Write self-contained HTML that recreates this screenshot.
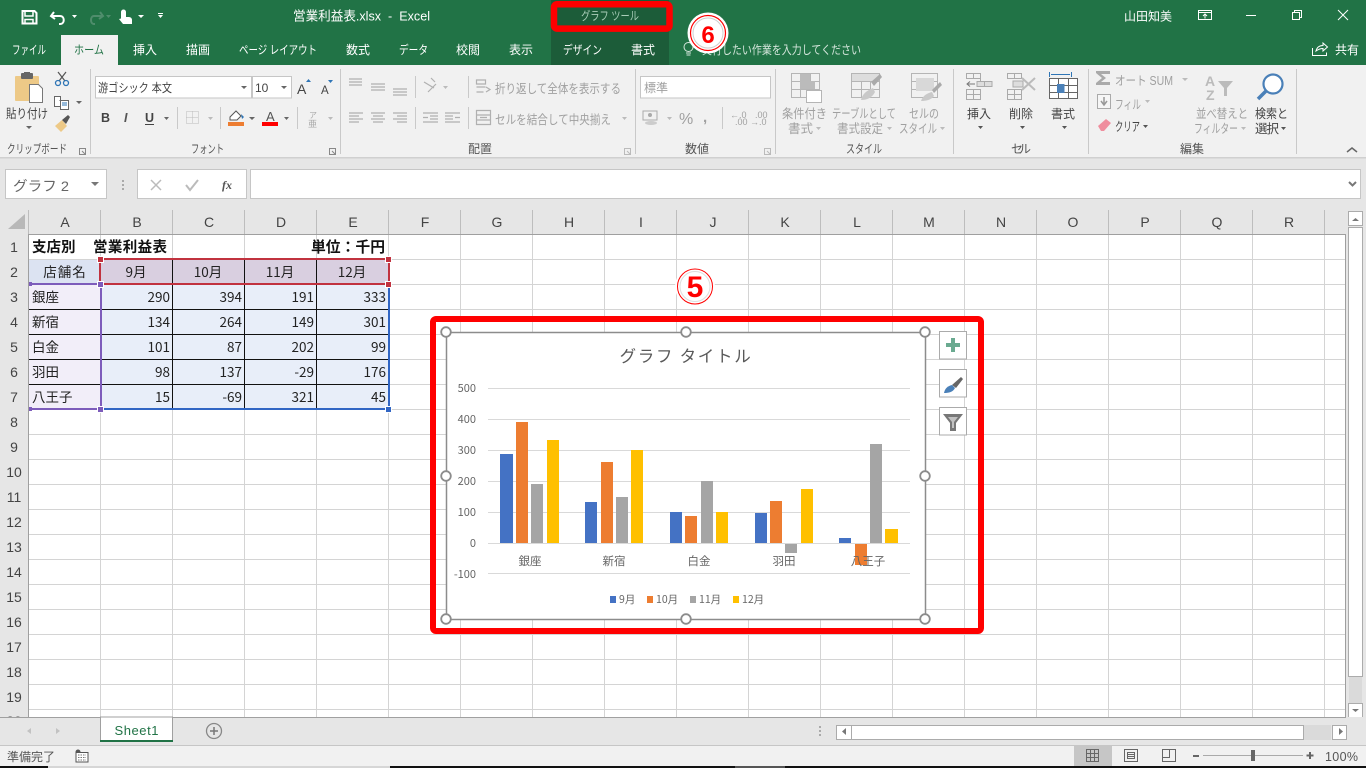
<!DOCTYPE html>
<html lang="ja"><head><meta charset="utf-8"><title>営業利益表.xlsx - Excel</title>
<style>
html,body{margin:0;padding:0;background:#e6e6e6;overflow:hidden}
svg{display:block;position:absolute;left:0;top:0}
text{font-family:"Liberation Sans","Noto Sans CJK JP",sans-serif}
.j{font-family:"Noto Sans CJK JP",sans-serif}
.w{fill:#fff;font-size:12px}
.d{fill:#a0a0a0;font-size:12.5px}
.e{fill:#444;font-size:12.5px}
.h{fill:#444;font-size:14px;text-anchor:middle}
.c{fill:#222;font-size:13.5px;font-family:"Noto Sans CJK JP",sans-serif}
.r{text-anchor:end}
.m{text-anchor:middle}
.a{fill:#666;font-size:11px;font-family:"Noto Sans CJK JP",sans-serif}
</style></head><body>
<svg width="1366" height="768" viewBox="0 0 1366 768" xmlns="http://www.w3.org/2000/svg">
<!-- backgrounds -->
<rect width="1366" height="65" fill="#217346"/>
<rect y="65" width="1366" height="92" fill="#f1f1f1"/>
<rect y="157" width="1366" height="1.5" fill="#d0d0d0"/>
<rect y="158.500" width="1366" height="560" fill="#e6e6e6"/>

<!-- QAT -->
<g fill="none" stroke="#fff" stroke-width="2">
<path d="M22.500 11h12l2 2v10.500h-14z"/><path d="M25 11v5h8v-5M25 23.500v-4h8v4" stroke-width="1.500"/>
<path d="M54 12l-3 4 4 3" stroke-width="2"/><path d="M52 16h8c5 0 5 8 0 8h-1" stroke-width="2"/>
<g stroke="#4f8d6c"><path d="M100 12l3 4-4 3"/><path d="M102 16h-8c-4 0-4 8 0 8h1"/></g>
</g>
<path d="M72 15h5l-2.500 3z" fill="#fff"/>
<path d="M106 15h5l-2.500 3z" fill="#4f8d6c"/>
<path d="M121 12a2.500 2.500 0 0 1 5 0v5h2.500c2 0 3.500 1 3.500 3v4h-9l-4-5 2 -.5v-6.500z" fill="#fff"/>
<path d="M138 15h6l-3 3zM158 15h5l-2.500 3z" fill="#fff"/><rect x="158" y="13" width="5" height="1" fill="#fff"/>
<text x="293" y="20.500" class="w" style="font-size:13px" textLength="137" lengthAdjust="spacingAndGlyphs" xml:space="preserve">営業利益表.xlsx  -  Excel</text>

<!-- contextual tabs -->
<rect x="551" y="0" width="118" height="65" fill="#1c5c39"/>
<text x="581" y="20" style="font-size:12px;fill:#a9cdb8" textLength="58" lengthAdjust="spacingAndGlyphs">グラフ ツール</text>
<rect x="554" y="4.300" width="115.500" height="24.300" rx="3" fill="none" stroke="#f00" stroke-width="6.500"/>

<!-- tabs -->
<rect x="61" y="35" width="57" height="30" fill="#f1f1f1"/>
<g class="w">
<text x="12" y="54" class="w" textLength="34" lengthAdjust="spacingAndGlyphs">ファイル</text>
<text x="74" y="54" style="font-size:12px;fill:#217346" textLength="30" lengthAdjust="spacingAndGlyphs">ホーム</text>
<text x="133" y="54" class="w" textLength="24">挿入</text>
<text x="186" y="54" class="w" textLength="24">描画</text>
<text x="239" y="54" class="w" textLength="78" lengthAdjust="spacingAndGlyphs">ページ レイアウト</text>
<text x="346" y="54" class="w" textLength="24">数式</text>
<text x="399" y="54" class="w" textLength="29" lengthAdjust="spacingAndGlyphs">データ</text>
<text x="456" y="54" class="w" textLength="24">校閲</text>
<text x="509" y="54" class="w" textLength="24">表示</text>
<text x="563" y="54" class="w" textLength="39" lengthAdjust="spacingAndGlyphs">デザイン</text>
<text x="631" y="54" class="w" textLength="24">書式</text>
<text x="702" y="54" style="font-size:12px;fill:#d5e6dc" textLength="159" lengthAdjust="spacingAndGlyphs">実行したい作業を入力してください</text>
<text x="1335" y="54" class="w" textLength="24">共有</text>
</g>
<g fill="none" stroke="#d5e6dc" stroke-width="1"><circle cx="688.500" cy="47" r="4.500"/><path d="M686 53h5M686.500 55h4"/></g>
<!-- circled 6 -->
<circle cx="708" cy="33" r="20.500" fill="#fff"/><circle cx="708" cy="33" r="17.500" fill="none" stroke="#f00" stroke-width="1.200"/>
<circle cx="708" cy="33" r="15" fill="none" stroke="#cfcfcf" stroke-width="1"/>
<text x="708" y="43" class="m" style="font-size:24px;font-weight:700;fill:#f00">6</text>

<!-- title right -->
<text x="1124" y="20.500" class="w" textLength="48">山田知美</text>
<g fill="none" stroke="#fff" stroke-width="1">
<path d="M1198.500 10.500h13v9h-13zM1198.500 12.500h13M1205 18.500v-4M1203 16l2-2 2 2"/>
<path d="M1246 15.500h10"/>
<path d="M1292.500 12.500h7v7h-7zM1294.500 12.500v-2h7v7h-2"/>
<path d="M1338 10l10 10M1348 10l-10 10"/>
<path d="M1312.500 48v7.500h14v-3M1316 51c1-4 4-5.500 7-5.500v-2.500l4.500 4-4.500 4v-2.500c-3 0-5 1-7 2.500z"/>
</g>

<!-- ribbon separators -->
<g fill="#c9c9c9">
<rect x="90" y="69" width="1" height="85"/><rect x="340" y="69" width="1" height="85"/><rect x="635" y="69" width="1" height="85"/><rect x="775" y="69" width="1" height="85"/><rect x="953" y="69" width="1" height="85"/><rect x="1088" y="69" width="1" height="85"/><rect x="1296" y="69" width="1" height="85"/>
<rect x="177" y="107" width="1" height="22"/><rect x="220" y="107" width="1" height="22"/><rect x="297" y="107" width="1" height="22"/>
<rect x="415" y="76" width="1" height="22"/><rect x="415" y="107" width="1" height="22"/><rect x="468" y="76" width="1" height="22"/><rect x="468" y="107" width="1" height="22"/>
<rect x="722" y="107" width="1" height="22"/>
</g>

<!-- clipboard -->
<rect x="15" y="76" width="24" height="25" rx="1" fill="#edc987"/><rect x="21" y="73" width="12" height="6" rx="1" fill="#666"/><rect x="24" y="72" width="6" height="3" fill="#666"/>
<path d="M29.500 84.500h9l4 4v14h-13z" fill="#fff" stroke="#777"/>
<g fill="none" stroke="#555" stroke-width="1.200"><path d="M58 72l7 9M66 72l-7 9"/></g>
<circle cx="58" cy="83" r="2.500" fill="none" stroke="#2e75b6" stroke-width="1.300"/><circle cx="66" cy="83" r="2.500" fill="none" stroke="#2e75b6" stroke-width="1.300"/>
<path d="M54.500 96.500h6v10h-6zM59.500 100.500h6l3 0v9h-8v-3" fill="#fff" stroke="#666"/><path d="M62 103h5M62 105h5" stroke="#2e75b6"/>
<path d="M76 101h6l-3 3z" fill="#666"/>
<path d="M55 126l7-6 5 6-6 6z" fill="#edc987"/><path d="M62 120l6-5 2 2-4 7z" fill="#555"/>
<text x="6" y="118" class="e" textLength="42" lengthAdjust="spacingAndGlyphs">貼り付け</text>
<path d="M26 126h6l-3 3z" fill="#666"/>
<text x="7" y="153" class="e" textLength="60" lengthAdjust="spacingAndGlyphs" style="font-size:12px;fill:#555">クリップボード</text>
<path d="M79.500 148.500h6v6h-6z M82 151l3 3" fill="none" stroke="#888"/>

<!-- font -->
<rect x="95.500" y="76.500" width="156" height="21.500" fill="#fff" stroke="#c6c6c6"/><rect x="252.500" y="76.500" width="39" height="21.500" fill="#fff" stroke="#c6c6c6"/>
<text x="98" y="92" style="font-size:12px;fill:#444" textLength="74" lengthAdjust="spacingAndGlyphs">游ゴシック 本文</text>
<text x="255" y="92" style="font-size:12px;fill:#444">10</text>
<path d="M241 86h6l-3 3zM281 86h6l-3 3z" fill="#666"/>
<text x="297" y="94" style="font-size:14px;fill:#444">A</text><path d="M306 82h5l-2.500-3z" fill="#2e75b6"/>
<text x="321" y="94" style="font-size:11.500px;fill:#444">A</text><path d="M328 80h5l-2.500 3z" fill="#2e75b6"/>
<text x="101" y="122" style="font-size:12.500px;font-weight:700;fill:#444">B</text>
<text x="124" y="122" style="font-size:12.500px;font-weight:700;font-style:italic;fill:#555">I</text>
<text x="145" y="122" style="font-size:12.500px;font-weight:700;fill:#444">U</text><rect x="145" y="124" width="9" height="1" fill="#444"/>
<path d="M164 117h5l-2.500 3zM249 117h6l-3 3zM284 117h5l-2.500 3z" fill="#666"/>
<path d="M208 117h5l-2.500 3zM328 117h5l-2.500 3z" fill="#bbb"/>
<path d="M186.500 111.500h12v12h-12z M192.500 111.500v12M186.500 117.500h12" fill="none" stroke="#bbb" stroke-dasharray="1 1"/>
<path d="M230 117l6-6 5 5-4 4h-7z" fill="#fff" stroke="#555"/><path d="M241 114l3 3-2 2z" fill="#2e75b6"/>
<rect x="228" y="122" width="16" height="4" fill="#ed7d31"/>
<text x="266" y="121" style="font-size:13px;fill:#555">A</text><rect x="262" y="122" width="16" height="4" fill="#f00"/>
<text x="309" y="118" style="font-size:8px;fill:#aaa">ア</text><text x="308" y="127" style="font-size:9px;fill:#aaa">亜</text>
<text x="191" y="153" class="e" textLength="33" lengthAdjust="spacingAndGlyphs" style="font-size:12px;fill:#555">フォント</text>
<path d="M329.500 148.500h6v6h-6z M332 151l3 3" fill="none" stroke="#888"/>

<!-- alignment -->
<g stroke="#b0b0b0" stroke-width="1.200" fill="none">
<path d="M349 79h13M349 82h13M349 85h13M371 84h14M371 87h14M371 90h14M393 89h14M393 92h14M393 95h14"/>
<path d="M349 113h14M349 116h10M349 119h14M349 122h10M371 113h14M373 116h10M371 119h14M373 122h10M393 113h14M397 116h10M393 119h14M397 122h10"/>
<path d="M423 113h15M430 116h8M430 119h8M423 122h15M428 117.500h-5M445 113h15M445 116h8M445 119h8M445 122h15M455 117.500h5"/>
<path d="M424 82l10 6M428 92l8-8M431 78l4 4"/>
<path d="M476.500 80h9v4h-9zM476.500 87h9M476.500 92h7M486 87l4 2.500-4 2.500"/>
<path d="M476.500 110.500h14v14h-14zM476.500 115h14M476.500 120h14M480 117.500h7"/>
</g>
<path d="M443 86h5l-2.500 3zM622 117h5l-2.500 3zM760 86h5l-2.500 3zM667 117h5l-2.500 3zM1182 78h6l-3 3zM1145 100h5l-2.500 3zM1241 127h5l-2.500 3z" fill="#bbb"/>
<text x="495" y="93" class="d" textLength="126" lengthAdjust="spacingAndGlyphs">折り返して全体を表示する</text>
<text x="495" y="124" class="d" textLength="116" lengthAdjust="spacingAndGlyphs">セルを結合して中央揃え</text>
<text x="468" y="153" class="e" textLength="24" style="font-size:12px;fill:#555">配置</text>
<path d="M624.500 148.500h6v6h-6z M627 151l3 3" fill="none" stroke="#bbb"/>

<!-- number -->
<rect x="640.500" y="76.500" width="130" height="21.500" fill="#fff" stroke="#c6c6c6"/>
<text x="644" y="92" class="d" style="font-size:12px" textLength="24">標準</text>
<path d="M643 111h14v9h-14z" fill="none" stroke="#aaa"/><circle cx="650" cy="115" r="2" fill="#aaa"/><ellipse cx="651" cy="123" rx="6" ry="2" fill="#ccc"/>
<text x="679" y="124" style="font-size:16px;fill:#a0a0a0">%</text>
<text x="703" y="122" style="font-size:15px;font-weight:700;fill:#a0a0a0">,</text>
<text x="730" y="118" style="font-size:9px;fill:#a0a0a0">←.0</text><text x="735" y="125" style="font-size:9px;fill:#a0a0a0">.00</text>
<text x="755" y="118" style="font-size:9px;fill:#a0a0a0">.00</text><text x="750" y="125" style="font-size:9px;fill:#a0a0a0">→.0</text>
<text x="685" y="153" style="font-size:12px;fill:#555" textLength="24">数値</text>
<path d="M764.500 148.500h6v6h-6z M767 151l3 3" fill="none" stroke="#bbb"/>

<!-- styles -->
<g stroke="#b5b5b5" fill="none">
<path d="M791.500 73.500h28v24h-28zM791.500 81.500h28M791.500 89.500h28M800.500 73.500v24M810.500 73.500v24"/>
<rect x="800" y="74" width="10" height="7" fill="#bbb" stroke="none"/><rect x="800" y="81" width="15" height="8" fill="#bbb" stroke="none"/>
<rect x="806.500" y="90.500" width="15" height="12" fill="#fff"/>
<path d="M851.500 73.500h28v24h-28zM851.500 81.500h28M851.500 89.500h28M861.500 73.500v24M870.500 73.500v24"/>
<rect x="852" y="74" width="27" height="7" fill="#ddd" stroke="none"/>
<path d="M871 82l9-8 2 3-8 9z" fill="#aaa" stroke="none"/><path d="M861 100c2-8 8-10 12-12l2 4c-3 6-8 8-14 8z" fill="#c9c9c9" stroke="none"/>
<path d="M911.500 73.500h26v24h-26zM911.500 81.500h26M911.500 89.500h26"/>
<rect x="916" y="78" width="18" height="13" fill="#d8d8d8" stroke="none"/>
<path d="M932 90l8-8 2 3-8 8z" fill="#aaa" stroke="none"/><path d="M921 101c2-6 7-8 11-9l2 4c-3 4-8 5-13 5z" fill="#c9c9c9" stroke="none"/>
</g>
<text x="782" y="118" class="d" textLength="45" lengthAdjust="spacingAndGlyphs">条件付き</text>
<text x="788" y="133" class="d" textLength="25" lengthAdjust="spacingAndGlyphs">書式</text><path d="M816 127h5l-2.500 3zM887 127h5l-2.500 3zM940 127h5l-2.500 3z" fill="#bbb"/>
<text x="832" y="118" class="d" textLength="64" lengthAdjust="spacingAndGlyphs">テーブルとして</text>
<text x="837" y="133" class="d" textLength="46" lengthAdjust="spacingAndGlyphs">書式設定</text>
<text x="909" y="118" class="d" textLength="30" lengthAdjust="spacingAndGlyphs">セルの</text>
<text x="899" y="133" class="d" textLength="38" lengthAdjust="spacingAndGlyphs">スタイル</text>
<text x="846" y="153" style="font-size:12px;fill:#555" textLength="36" lengthAdjust="spacingAndGlyphs">スタイル</text>

<!-- cells -->
<g stroke="#aaa" fill="none">
<path d="M966.500 73.500h14v5h-14zM973.500 73.500v5M966.500 78.500h14v5M966.500 89.500h14v10h-14zM973.500 89.500v10M966.500 94.500h14"/>
<path d="M977 81.500h15v5h-15zM984.500 81.500v5" fill="#ddd"/><path d="M975 84h-8M970 81.500l-3 2.500 3 2.500" stroke="#777"/>
<path d="M1007.500 73.500h14v5h-14zM1014.500 73.500v5M1007.500 89.500h14v10h-14zM1014.500 89.500v10M1007.500 94.500h14"/>
<path d="M1013 81h10v6h-10z" fill="#ddd"/><path d="M1022 78l13 12M1035 78l-13 12" stroke="#bbb" stroke-width="2"/>
</g>
<text x="967" y="118" class="e" style="font-size:12px" textLength="24">挿入</text><path d="M978 126h5l-2.500 3z" fill="#555"/>
<text x="1009" y="118" class="e" style="font-size:12px" textLength="24">削除</text><path d="M1020 126h5l-2.500 3z" fill="#555"/>
<text x="1051" y="118" class="e" style="font-size:12px" textLength="24">書式</text><path d="M1062 126h5l-2.500 3z" fill="#555"/>
<path d="M1049.500 72v5M1071.500 72v5M1051 74.500h19" stroke="#2e75b6" fill="none"/>
<path d="M1049.500 78.500h28v20h-28zM1049.500 85.500h28M1049.500 92.500h28M1058.500 78.500v20M1068.500 78.500v20" fill="#fff" stroke="#666"/>
<rect x="1057" y="84" width="7.500" height="9" fill="#4a80b8"/>
<text x="1011" y="153" style="font-size:12px;fill:#555" textLength="20">セル</text>

<!-- editing -->
<path d="M1096 71h14v3h-9l5 4-5 4h9v3h-14v-2l6-5-6-5z" fill="#aaa"/>
<text x="1115" y="85" class="d" style="font-size:12.500px" textLength="58" lengthAdjust="spacingAndGlyphs">オート SUM</text>
<rect x="1097.500" y="94.500" width="13" height="14" fill="#f6f6f6" stroke="#aaa"/><path d="M1104 97v7M1101 101l3 4 3-4" fill="none" stroke="#999" stroke-width="1.500"/>
<text x="1115" y="109" class="d" textLength="26" lengthAdjust="spacingAndGlyphs">フィル</text>
<path d="M1098 126l8-7 5 4-7 8h-3z" fill="#ef8e9e"/>
<text x="1115" y="131" class="e" textLength="25" lengthAdjust="spacingAndGlyphs">クリア</text><path d="M1143 125h5l-2.500 3z" fill="#555"/>
<text x="1205" y="86" style="font-size:14px;font-weight:700;fill:#bbb">A</text><text x="1206" y="100" style="font-size:14px;font-weight:700;fill:#bbb">Z</text>
<path d="M1218 81h15l-6 7v8h-3v-8z" fill="#bbb"/>
<text x="1196" y="118" class="d" textLength="52" lengthAdjust="spacingAndGlyphs">並べ替えと</text>
<text x="1194" y="133" class="d" textLength="44" lengthAdjust="spacingAndGlyphs">フィルター</text>
<circle cx="1273" cy="84" r="9.500" fill="#fff" stroke="#4a80b8" stroke-width="2.200"/><path d="M1266 91l-8 8" stroke="#4a80b8" stroke-width="3.500" fill="none"/>
<text x="1255" y="118" class="e" textLength="33" lengthAdjust="spacingAndGlyphs">検索と</text>
<text x="1255" y="133" class="e" textLength="24">選択</text><path d="M1281 127h5l-2.500 3z" fill="#555"/>
<text x="1180" y="153" style="font-size:12px;fill:#555" textLength="24">編集</text>
<path d="M1347 152l5-4 5 4" fill="none" stroke="#666" stroke-width="1.500"/>

<!-- formula bar -->
<rect x="5.500" y="169.500" width="101" height="29" fill="#fff" stroke="#c6c6c6"/>
<text x="13" y="191" style="font-size:14px;fill:#666" textLength="56" lengthAdjust="spacingAndGlyphs">グラフ 2</text>
<path d="M91 182h8l-4 4z" fill="#777"/>
<path d="M122 180h2v2h-2zM122 184h2v2h-2zM122 188h2v2h-2z" fill="#aaa"/>
<rect x="137.500" y="169.500" width="109" height="29" fill="#fff" stroke="#c6c6c6"/>
<path d="M151 180l10 10M161 180l-10 10" stroke="#bbb" stroke-width="1.500" fill="none"/>
<path d="M186 185l4 5 8-10" stroke="#bbb" stroke-width="2" fill="none"/>
<text x="222" y="189" style="font-size:12px;font-style:italic;font-family:'Liberation Serif',serif;font-weight:700;fill:#555">fx</text>
<rect x="250.500" y="169.500" width="1110" height="29" fill="#fff" stroke="#c6c6c6"/>
<path d="M1349 182l3.500 3.500 3.500-3.500" stroke="#777" stroke-width="2" fill="none"/>

<!-- sheet -->
<rect x="29" y="235" width="1316" height="482" fill="#fff"/>
<g stroke="#d4d4d4" stroke-width="1" fill="none">
<path d="M100.500 235V717M172.500 235V717M244.500 235V717M316.500 235V717M388.500 235V717M460.500 235V717M532.500 235V717M604.500 235V717M676.500 235V717M748.500 235V717M820.500 235V717M892.500 235V717M964.500 235V717M1036.500 235V717M1108.500 235V717M1180.500 235V717M1252.500 235V717M1324.500 235V717"/>
<path d="M29 259.500H1345M29 284.500H1345M29 309.500H1345M29 334.500H1345M29 359.500H1345M29 384.500H1345M29 409.500H1345M29 434.500H1345M29 459.500H1345M29 484.500H1345M29 509.500H1345M29 534.500H1345M29 559.500H1345M29 584.500H1345M29 609.500H1345M29 634.500H1345M29 659.500H1345M29 684.500H1345M29 709.500H1345"/>
</g>
<g stroke="#bdbdbd" stroke-width="1" fill="none">
<path d="M28.500 210V235M100.500 210V234M172.500 210V234M244.500 210V234M316.500 210V234M388.500 210V234M460.500 210V234M532.500 210V234M604.500 210V234M676.500 210V234M748.500 210V234M820.500 210V234M892.500 210V234M964.500 210V234M1036.500 210V234M1108.500 210V234M1180.500 210V234M1252.500 210V234M1324.500 210V234"/>
</g>
<path d="M28.500 234.500H1345M28.500 234V717M1345.500 234V717" stroke="#9f9f9f" fill="none"/>
<path d="M25 214v15H8z" fill="#b8b8b8"/>
<g class="h">
<text x="65" y="227" class="h">A</text><text x="137" y="227" class="h">B</text><text x="209" y="227" class="h">C</text><text x="281" y="227" class="h">D</text><text x="353" y="227" class="h">E</text><text x="425" y="227" class="h">F</text><text x="497" y="227" class="h">G</text><text x="569" y="227" class="h">H</text><text x="641" y="227" class="h">I</text><text x="713" y="227" class="h">J</text><text x="785" y="227" class="h">K</text><text x="857" y="227" class="h">L</text><text x="929" y="227" class="h">M</text><text x="1001" y="227" class="h">N</text><text x="1073" y="227" class="h">O</text><text x="1145" y="227" class="h">P</text><text x="1217" y="227" class="h">Q</text><text x="1289" y="227" class="h">R</text>
<text x="14" y="252" class="h">1</text><text x="14" y="277" class="h">2</text><text x="14" y="302" class="h">3</text><text x="14" y="327" class="h">4</text><text x="14" y="352" class="h">5</text><text x="14" y="377" class="h">6</text><text x="14" y="402" class="h">7</text><text x="14" y="427" class="h">8</text><text x="14" y="452" class="h">9</text><text x="14" y="477" class="h">10</text><text x="14" y="502" class="h">11</text><text x="14" y="527" class="h">12</text><text x="14" y="552" class="h">13</text><text x="14" y="577" class="h">14</text><text x="14" y="602" class="h">15</text><text x="14" y="627" class="h">16</text><text x="14" y="652" class="h">17</text><text x="14" y="677" class="h">18</text><text x="14" y="702" class="h">19</text><text x="14" y="726" class="h">20</text>
</g>

<!-- table fills -->
<rect x="29" y="260" width="71" height="24" fill="#dce3f2"/>
<rect x="101" y="260" width="288" height="24" fill="#d9cfe0"/>
<rect x="29" y="285" width="71" height="124" fill="#f2eef9"/>
<rect x="101" y="285" width="288" height="124" fill="#e8eef9"/>
<path d="M172.500 260V409M244.500 260V409M316.500 260V409M29 309.500H389M29 334.500H389M29 359.500H389M29 384.500H389" stroke="#111" fill="none"/>

<text x="32" y="252" style="font-size:14.500px;font-weight:700;fill:#111" class="j">支店別</text>
<text x="93" y="252" style="font-size:14.500px;font-weight:700;fill:#111" class="j" textLength="74">営業利益表</text>
<text x="385" y="252" style="font-size:14.800px;font-weight:700;fill:#111" class="j r">単位：千円</text>
<g>
<text x="65" y="277" class="c m" style="letter-spacing:1px">店舗名</text>
<text x="136" y="277" class="c m">9月</text><text x="208" y="277" class="c m">10月</text><text x="280" y="277" class="c m">11月</text><text x="352" y="277" class="c m">12月</text>
<text x="32" y="302" class="c">銀座</text><text x="32" y="327" class="c">新宿</text><text x="32" y="352" class="c">白金</text><text x="32" y="377" class="c">羽田</text><text x="32" y="402" class="c">八王子</text>
<text x="170" y="302" class="c r">290</text><text x="242" y="302" class="c r">394</text><text x="314" y="302" class="c r">191</text><text x="386" y="302" class="c r">333</text>
<text x="170" y="327" class="c r">134</text><text x="242" y="327" class="c r">264</text><text x="314" y="327" class="c r">149</text><text x="386" y="327" class="c r">301</text>
<text x="170" y="352" class="c r">101</text><text x="242" y="352" class="c r">87</text><text x="314" y="352" class="c r">202</text><text x="386" y="352" class="c r">99</text>
<text x="170" y="377" class="c r">98</text><text x="242" y="377" class="c r">137</text><text x="314" y="377" class="c r">-29</text><text x="386" y="377" class="c r">176</text>
<text x="170" y="402" class="c r">15</text><text x="242" y="402" class="c r">-69</text><text x="314" y="402" class="c r">321</text><text x="386" y="402" class="c r">45</text>
</g>
<!-- ranges -->
<path d="M101 409H389V285" fill="none" stroke="#3166c4" stroke-width="2"/>
<path d="M29 284H101V409H29" fill="none" stroke="#7d5cbb" stroke-width="2"/>
<rect x="100" y="259" width="289" height="25" fill="none" stroke="#c1323f" stroke-width="2"/>
<g stroke="#fff" stroke-width="1">
<rect x="97.500" y="256.500" width="6" height="6" fill="#c1323f"/><rect x="385.500" y="256.500" width="6" height="6" fill="#c1323f"/><rect x="385.500" y="281.500" width="6" height="6" fill="#c1323f"/>
<rect x="97.500" y="281.500" width="6" height="6" fill="#7d5cbb"/><rect x="97.500" y="406.500" width="6" height="6" fill="#7d5cbb"/>
<rect x="385.500" y="406.500" width="6" height="6" fill="#3166c4"/>
</g>
<rect x="29" y="282" width="3" height="4" fill="#7d5cbb"/><rect x="29" y="407" width="3" height="4" fill="#7d5cbb"/>

<!-- circled 5 -->
<circle cx="695" cy="286.500" r="20" fill="#fff"/><circle cx="695" cy="286.500" r="17.500" fill="none" stroke="#f00" stroke-width="1"/>
<circle cx="695" cy="286.500" r="15" fill="none" stroke="#ddd" stroke-width="1"/>
<text x="695" y="297" class="m" style="font-size:30px;font-weight:700;fill:#f00">5</text>

<!-- chart -->
<rect x="446.500" y="332.500" width="479" height="287" fill="#fff" stroke="#8c8c8c" stroke-width="1.500"/>
<text x="686" y="362" class="m j" style="font-size:16.500px;fill:#595959;letter-spacing:1.700px">グラフ タイトル</text>
<path d="M488 388.500H910M488 419.500H910M488 450.500H910M488 481.500H910M488 512.500H910M488 543.500H910M488 573.500H910" stroke="#d9d9d9" fill="none"/>
<g class="a r">
<text x="476" y="392" class="a r">500</text><text x="476" y="423" class="a r">400</text><text x="476" y="454" class="a r">300</text><text x="476" y="485" class="a r">200</text><text x="476" y="516" class="a r">100</text><text x="476" y="547" class="a r">0</text><text x="476" y="578" class="a r">-100</text>
</g>
<g fill="#4472c4"><rect x="500" y="454" width="13" height="89"/><rect x="585" y="502" width="12" height="41"/><rect x="670" y="512" width="12" height="31"/><rect x="755" y="513" width="12" height="30"/><rect x="839" y="538" width="12" height="5"/></g>
<g fill="#ed7d31"><rect x="516" y="422" width="12" height="121"/><rect x="601" y="462" width="12" height="81"/><rect x="685" y="516" width="12" height="27"/><rect x="770" y="501" width="12" height="42"/><rect x="855" y="544" width="12" height="21"/></g>
<g fill="#a5a5a5"><rect x="531" y="484" width="12" height="59"/><rect x="616" y="497" width="12" height="46"/><rect x="701" y="481" width="12" height="62"/><rect x="785" y="544" width="12" height="9"/><rect x="870" y="444" width="12" height="99"/></g>
<g fill="#ffc000"><rect x="547" y="440" width="12" height="103"/><rect x="631" y="450" width="12" height="93"/><rect x="716" y="512" width="12" height="31"/><rect x="801" y="489" width="12" height="54"/><rect x="885" y="529" width="13" height="14"/></g>
<g style="font-size:11.500px">
<text x="530" y="565" class="a m" style="font-size:11.500px">銀座</text><text x="614" y="565" class="a m" style="font-size:11.500px">新宿</text><text x="699" y="565" class="a m" style="font-size:11.500px">白金</text><text x="784" y="565" class="a m" style="font-size:11.500px">羽田</text><text x="868" y="565" class="a m" style="font-size:11.500px">八王子</text>
</g>
<rect x="610" y="596" width="6" height="7" fill="#4472c4"/><text x="619" y="603" class="a" style="font-size:10.500px">9月</text>
<rect x="647" y="596" width="6" height="7" fill="#ed7d31"/><text x="656" y="603" class="a" style="font-size:10.500px">10月</text>
<rect x="690" y="596" width="6" height="7" fill="#a5a5a5"/><text x="699" y="603" class="a" style="font-size:10.500px">11月</text>
<rect x="733" y="596" width="6" height="7" fill="#ffc000"/><text x="742" y="603" class="a" style="font-size:10.500px">12月</text>
<!-- handles -->
<g fill="#fff" stroke="#8c8c8c" stroke-width="1.800">
<circle cx="446" cy="332" r="4.800"/><circle cx="686" cy="332" r="4.800"/><circle cx="925" cy="332" r="4.800"/><circle cx="446" cy="476" r="4.800"/><circle cx="925" cy="476" r="4.800"/><circle cx="446" cy="619" r="4.800"/><circle cx="686" cy="619" r="4.800"/><circle cx="925" cy="619" r="4.800"/>
</g>
<!-- chart buttons -->
<g fill="#fff" stroke="#ababab"><rect x="939.500" y="331.500" width="27" height="27.500"/><rect x="939.500" y="369.500" width="27" height="27.500"/><rect x="939.500" y="407.500" width="27" height="27.500"/></g>
<path d="M951 338h4v5h5v4h-5v5h-4v-5h-5v-4h5z" fill="#6aaa90"/>
<path d="M952 385l9-8 2 2-7 9z" fill="#666"/><path d="M944 393c1-5 4-7 8-8l3 3c-2 4-6 5-11 5z" fill="#4a80b8"/>
<path d="M943 414h20l-7 9v8h-6v-8z" fill="#777"/><path d="M948 417h10l-4 5v6h-2v-6z" fill="#fff" opacity=".55"/>
<!-- red frame -->
<rect x="433" y="319" width="548" height="312" rx="3" fill="none" stroke="#f00" stroke-width="6"/>

<!-- vertical scrollbar -->
<rect x="1346" y="210" width="20" height="508" fill="#e6e6e6"/>
<rect x="1348.500" y="211.500" width="14" height="14" fill="#fff" stroke="#ababab"/><path d="M1352 221h7l-3.500-3z" fill="#777"/>
<rect x="1348.500" y="227.500" width="14" height="449" fill="#fff" stroke="#ababab"/>
<rect x="1349" y="677" width="13" height="26" fill="#dadada"/>
<rect x="1348.500" y="703.500" width="14" height="14" fill="#fff" stroke="#ababab"/><path d="M1352 709h7l-3.500 3z" fill="#777"/>

<!-- tab bar -->
<rect y="717" width="1366" height="28" fill="#e6e6e6"/>
<rect y="717" width="1346" height="1" fill="#a0a0a0"/>
<rect x="100.500" y="717" width="72" height="24" fill="#fff" stroke="#a0a0a0"/>
<rect x="100" y="740" width="73" height="2" fill="#217346"/>
<text x="136.500" y="735" class="m" style="font-size:13px;fill:#217346" textLength="44">Sheet1</text>
<path d="M31 728v6l-4-3zM56 728v6l4-3z" fill="#c2c2c2"/>
<circle cx="214" cy="731" r="7.500" fill="none" stroke="#888" stroke-width="1.300"/><path d="M214 727v8M210 731h8" stroke="#777" stroke-width="1.500"/>
<path d="M819 726h2v2h-2zM819 730h2v2h-2zM819 734h2v2h-2z" fill="#aaa"/>
<rect x="836.500" y="725.500" width="15" height="14" fill="#fff" stroke="#ababab"/><path d="M846 728v7l-4-3.500z" fill="#777"/>
<rect x="851.500" y="725.500" width="452" height="14" fill="#fff" stroke="#ababab"/>
<rect x="1304" y="725" width="27" height="15" fill="#dadada"/>
<rect x="1332.500" y="725.500" width="14" height="14" fill="#fff" stroke="#ababab"/><path d="M1339 728v7l4-3.500z" fill="#777"/>

<!-- status bar -->
<rect y="745" width="1366" height="21" fill="#f1f1f1"/><rect y="745" width="1366" height="1" fill="#c6c6c6"/>
<text x="7" y="761" style="font-size:12px;fill:#555" textLength="48" lengthAdjust="spacingAndGlyphs">準備完了</text>
<circle cx="78" cy="752" r="2.500" fill="#555"/><path d="M76 752.500h12v9.500h-12z" fill="#fff" stroke="#555"/><path d="M78 755h8M78 757.500h8M78 760h8" stroke="#777" stroke-dasharray="1.500 1"/>
<rect x="1074" y="746" width="38" height="20" fill="#c6c6c6"/>
<path d="M1086.500 749.500h12v12h-12zM1086.500 753.500h12M1086.500 757.500h12M1090.500 749.500v12M1094.500 749.500v12" fill="none" stroke="#666"/>
<path d="M1124.500 749.500h13v12h-13zM1127.500 752.500h7v6h-7zM1128 754.500h6M1128 756.500h6" fill="none" stroke="#666"/>
<path d="M1162.500 749.500h13v12h-13zM1162.500 757.500h7v-8" fill="none" stroke="#666"/>
<rect x="1193" y="755" width="6" height="2" fill="#666"/><rect x="1203" y="755" width="100" height="1" fill="#aaa"/><rect x="1251" y="750" width="4" height="11" fill="#666"/>
<path d="M1310 752v7M1306.500 755.500h7" stroke="#666" stroke-width="2"/>
<text x="1325" y="761" style="font-size:12.500px;fill:#555" textLength="33">100%</text>

<!-- bottom strip -->
<rect y="766" width="1366" height="2" fill="#111"/>
<rect x="48" y="766" width="342" height="2" fill="#d6d6d6"/>
<rect x="735" y="766" width="50" height="2" fill="#555"/>
</svg>
</body></html>
